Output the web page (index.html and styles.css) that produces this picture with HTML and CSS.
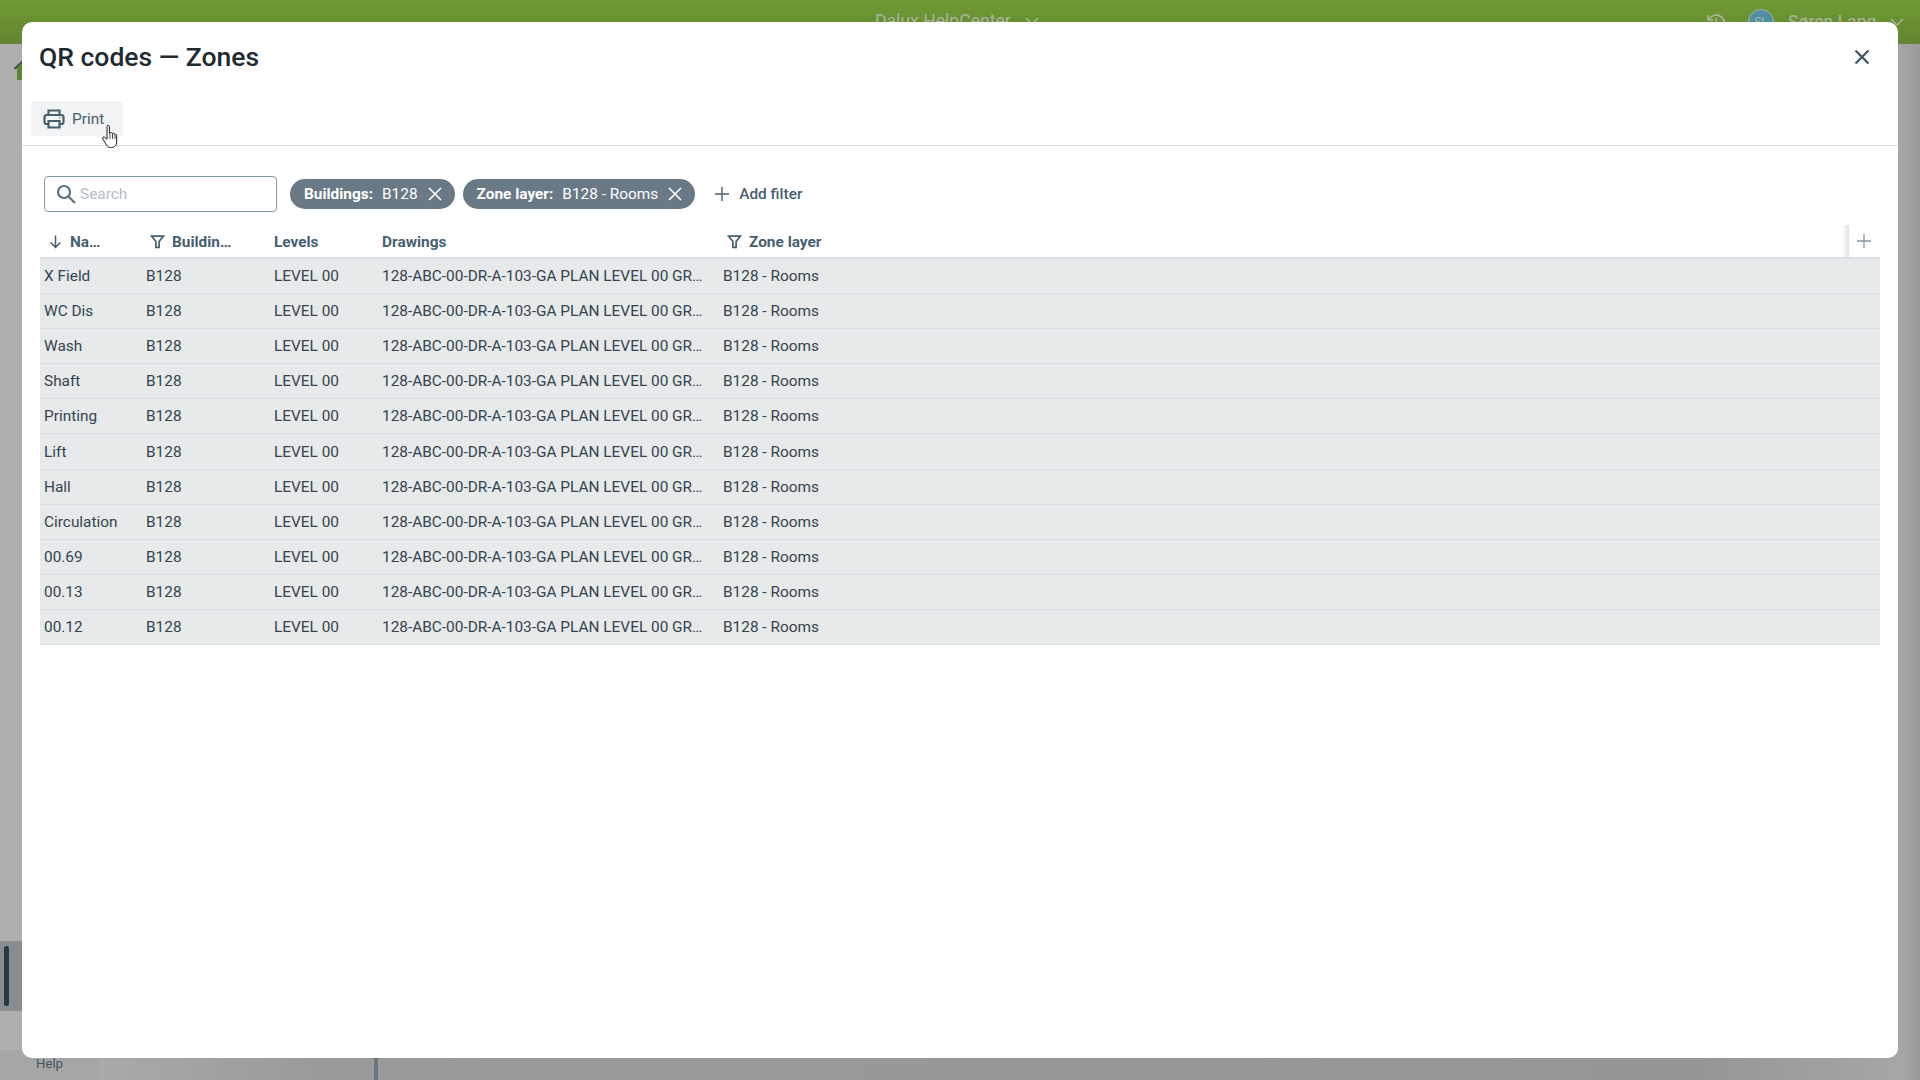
FILE: index.html
```html
<!DOCTYPE html>
<html lang="en">
<head>
    <meta charset="UTF-8">
    <title>QR codes — Zones</title>
    <link rel="stylesheet" href="styles.css">
</head>
<body>
    <!-- app behind the dialog -->
    <div class="app">
        <header class="topbar">
            <div class="project">Dalux HelpCenter
                <svg class="chev" width="14" height="14" viewBox="0 0 14 14"><path d="M1 4l6 6 6-6" fill="none" stroke="currentColor" stroke-width="1.5"/></svg>
            </div>
            <div class="user">
                <svg class="history" width="22" height="22" viewBox="0 0 22 22"><path d="M3 4v5h5M4 9a8 8 0 1 1-.6 4M11 7v5l3 2" fill="none" stroke="currentColor" stroke-width="1.6"/></svg>
                <span class="avatar">SL</span>
                <span class="username">Søren Lang</span>
                <svg class="chev" width="14" height="14" viewBox="0 0 14 14"><path d="M1 4l6 6 6-6" fill="none" stroke="currentColor" stroke-width="1.5"/></svg>
            </div>
        </header>
        <svg class="home" width="18" height="20" viewBox="0 0 18 20"><path d="M0 9L9 0l9 9h-2v11H3V9z" fill="#5f8530"/><path d="M0 9L9 1" stroke="#3f5563" stroke-width="2"/></svg>
        <div class="nav-active"><span class="nav-mark"></span></div>
        <div class="help-panel"><span class="help">Help</span></div>
        <div class="divider-v"></div>
    </div>

    <div class="modal">
        <div class="modal-head">
            <h1>QR codes — Zones</h1>
            <svg class="close" width="24" height="24" viewBox="0 0 24 24"><path d="M5.500 5.500l13 13M18.500 5.500l-13 13" fill="none" stroke="#3f5563" stroke-width="2.2"/></svg>
        </div>
        <div class="toolbar">
            <button class="print-btn">
                <svg width="24" height="24" viewBox="0 0 24 24" fill="none" stroke="#47606f" stroke-width="2.2"><path d="M6.500 8V3.500h11V8"/><path d="M6.500 17H4.500a2 2 0 0 1-2-2v-5a2 2 0 0 1 2-2h15a2 2 0 0 1 2 2v5a2 2 0 0 1-2 2h-2"/><path d="M6.500 14h11v6.500h-11z"/><path d="M17.500 10.800h1" stroke-width="1.6"/></svg>
                Print
            </button>
        </div>

        <div class="filters">
            <div class="search">
                <svg width="22" height="22" viewBox="0 0 22 22" fill="none" stroke="#5b7180" stroke-width="2.2"><circle cx="9" cy="9" r="6"/><path d="M13.500 13.500l6.500 6.500"/></svg>
                <span>Search</span>
            </div>
            <div class="chip"><b>Buildings:</b><span>B128</span>
                <svg width="16" height="16" viewBox="0 0 16 16"><path d="M2 2l12 12M14 2L2 14" stroke="#fff" stroke-width="1.6"/></svg>
            </div>
            <div class="chip"><b>Zone layer:</b><span>B128 - Rooms</span>
                <svg width="16" height="16" viewBox="0 0 16 16"><path d="M2 2l12 12M14 2L2 14" stroke="#fff" stroke-width="1.6"/></svg>
            </div>
            <div class="add-filter">
                <svg width="16" height="16" viewBox="0 0 16 16"><path d="M8 1v14M1 8h14" stroke="#47606f" stroke-width="1.4"/></svg>
                Add filter
            </div>
        </div>

        <div class="table">
            <div class="row head">
                <div class="has-icon"><svg width="15" height="15" viewBox="0 0 14 14" fill="none" stroke="#47606f" stroke-width="1.4"><path d="M7 1.500v11M2.500 8L7 12.500 11.500 8"/></svg>Na…</div>
                <div class="has-icon"><svg width="15" height="15" viewBox="0 0 14 14" fill="none" stroke="#47606f" stroke-width="1.6"><path d="M1.500 2h11L8.500 7v5.500h-3V7z"/></svg>Buildin…</div>
                <div>Levels</div>
                <div>Drawings</div>
                <div class="has-icon"><svg width="15" height="15" viewBox="0 0 14 14" fill="none" stroke="#47606f" stroke-width="1.6"><path d="M1.500 2h11L8.500 7v5.500h-3V7z"/></svg>Zone layer</div>
                <div class="add-col"><svg width="16" height="16" viewBox="0 0 16 16"><path d="M8 1v14M1 8h14" stroke="#8496a2" stroke-width="1.300"/></svg></div>
            </div>
            <div class="row"><div>X Field</div><div>B128</div><div>LEVEL 00</div><div>128-ABC-00-DR-A-103-GA PLAN LEVEL 00 GR…</div><div>B128 - Rooms</div></div>
            <div class="row"><div>WC Dis</div><div>B128</div><div>LEVEL 00</div><div>128-ABC-00-DR-A-103-GA PLAN LEVEL 00 GR…</div><div>B128 - Rooms</div></div>
            <div class="row"><div>Wash</div><div>B128</div><div>LEVEL 00</div><div>128-ABC-00-DR-A-103-GA PLAN LEVEL 00 GR…</div><div>B128 - Rooms</div></div>
            <div class="row"><div>Shaft</div><div>B128</div><div>LEVEL 00</div><div>128-ABC-00-DR-A-103-GA PLAN LEVEL 00 GR…</div><div>B128 - Rooms</div></div>
            <div class="row"><div>Printing</div><div>B128</div><div>LEVEL 00</div><div>128-ABC-00-DR-A-103-GA PLAN LEVEL 00 GR…</div><div>B128 - Rooms</div></div>
            <div class="row"><div>Lift</div><div>B128</div><div>LEVEL 00</div><div>128-ABC-00-DR-A-103-GA PLAN LEVEL 00 GR…</div><div>B128 - Rooms</div></div>
            <div class="row"><div>Hall</div><div>B128</div><div>LEVEL 00</div><div>128-ABC-00-DR-A-103-GA PLAN LEVEL 00 GR…</div><div>B128 - Rooms</div></div>
            <div class="row"><div>Circulation</div><div>B128</div><div>LEVEL 00</div><div>128-ABC-00-DR-A-103-GA PLAN LEVEL 00 GR…</div><div>B128 - Rooms</div></div>
            <div class="row"><div>00.69</div><div>B128</div><div>LEVEL 00</div><div>128-ABC-00-DR-A-103-GA PLAN LEVEL 00 GR…</div><div>B128 - Rooms</div></div>
            <div class="row"><div>00.13</div><div>B128</div><div>LEVEL 00</div><div>128-ABC-00-DR-A-103-GA PLAN LEVEL 00 GR…</div><div>B128 - Rooms</div></div>
            <div class="row"><div>00.12</div><div>B128</div><div>LEVEL 00</div><div>128-ABC-00-DR-A-103-GA PLAN LEVEL 00 GR…</div><div>B128 - Rooms</div></div>
        </div>
    </div>

    <!-- mouse pointer -->
    <svg class="cursor" width="20" height="26" viewBox="0 0 20 26"><path d="M6 2.500c0-1.600 2.400-1.600 2.400 0v7l.6-.3c.5-.9 2-.8 2.300.2l.1.4c.6-.8 2-.6 2.200.4l.1.4c.7-.6 2-.2 2 .9v6.500c0 3-1.800 5.500-5 5.500H9.500c-2 0-3-1-4-2.500L1.800 15c-.9-1.300.8-2.800 2-1.700L6 15.300z" fill="#fff" stroke="#1c1c1c" stroke-width="1"/><path d="M9 10v5M11.500 10v5M14 11v4" stroke="#1c1c1c" stroke-width=".8"/></svg>
</body>
</html>
```

FILE: styles.css
```css
* {
    box-sizing: border-box;
}

body {
    margin: 0;
    height: 1080px;
    overflow: hidden;
    font-family: Roboto, "Liberation Sans", sans-serif;
    font-size: 15.4px;
    color: #36444d;
    background: #fff;
}

/* App behind the dialog, dimmed */
.app {
    position: absolute;
    inset: 0;
    background: linear-gradient(90deg, #b0b0b0 0, #9a9a9a 320px, #969696 1700px, #a6a6a6 1900px, #9a9a9a 1920px);
}

.topbar {
    height: 44px;
    background: linear-gradient(180deg, #6f9a34, #61862f);
    color: #a9b5a0;
    position: relative;
    font-size: 17.6px;
}

.project {
    position: absolute;
    left: 875px;
    top: 11px;
    display: flex;
    align-items: center;
    gap: 14px;
}

.user {
    position: absolute;
    left: 1705px;
    top: 9px;
    display: flex;
    align-items: center;
}

.username {
    margin-left: 14px;
    margin-right: 14px;
}

.avatar {
    width: 26px;
    height: 26px;
    margin-left: 21px;
    border-radius: 50%;
    background: #4f8fa5;
    border: 1px solid #a9b5a0;
    font-size: 12px;
    text-align: center;
    line-height: 24px;
}

.home {
    position: absolute;
    left: 14px;
    top: 60px;
}

.nav-active {
    position: absolute;
    left: 0;
    top: 941px;
    width: 22px;
    height: 70px;
    background: #8a8d8f;
}

.nav-mark {
    position: absolute;
    left: 4px;
    top: 5px;
    width: 5px;
    height: 60px;
    border-radius: 3px;
    background: #263a46;
}

.help-panel {
    position: absolute;
    left: 0;
    top: 1050px;
    width: 100px;
    height: 30px;
    background: #a6a6a6;
}

.help {
    position: absolute;
    left: 36px;
    top: 6px;
    font-size: 13.200px;
    color: #3f5563;
}

.divider-v {
    position: absolute;
    left: 374px;
    top: 1040px;
    width: 4px;
    height: 40px;
    background: #6b757c;
}

/* Dialog */
.modal {
    position: absolute;
    left: 22px;
    top: 22px;
    width: 1876px;
    height: 1036px;
    background: #fff;
    border-radius: 10px;
}

.modal-head {
    display: flex;
    align-items: center;
    justify-content: space-between;
    height: 59px;
    padding: 10px 24px 0 17px;
}

h1 {
    margin: 0;
    font-size: 26.500px;
    font-weight: 500;
    color: #1f2a31;
}

.close {
    display: block;
    margin-top: 1px;
}

.toolbar {
    height: 65px;
    padding: 20px 9px 0;
    border-bottom: 1px solid #dcdfe1;
}

.print-btn {
    display: flex;
    align-items: center;
    gap: 6px;
    width: 92px;
    height: 35px;
    padding: 0 11px;
    border: none;
    border-radius: 4px;
    background: #f1f3f4;
    font-family: inherit;
    font-size: 15.400px;
    color: #47606f;
}

.filters {
    display: flex;
    align-items: center;
    height: 36px;
    margin: 30px 0 0 22px;
}

.search {
    display: flex;
    align-items: center;
    gap: 3px;
    width: 233px;
    height: 36px;
    padding-left: 10px;
    border: 1px solid #8496a2;
    border-radius: 4px;
    color: #b4bec5;
    margin-right: 13px;
}

.chip {
    display: flex;
    align-items: center;
    height: 30px;
    padding: 0 12px 0 14px;
    margin-right: 8px;
    border-radius: 15px;
    background: #697986;
    color: #fff;
}

.chip b {
    font-weight: 700;
    margin-right: 9px;
}

.chip span {
    margin-right: 9px;
}

.add-filter {
    display: flex;
    align-items: center;
    gap: 9px;
    margin-left: 11px;
    font-weight: 500;
    color: #47606f;
}

/* Table */
.table {
    margin: 13px 18px 0;
}

.row {
    display: grid;
    grid-template-columns: 102px 128px 108px 341px 1fr;
    align-items: center;
    height: 35.100px;
    background: #e6eaeb;
    border-bottom: 1px solid #dcdfe1;
    color: #36444d;
}

.row > div {
    padding-left: 4px;
    white-space: nowrap;
}

.row.head {
    height: 34px;
    padding-top: 1px;
    background: #fff;
    border-bottom: 2px solid #dcdfe1;
    font-weight: 700;
    color: #47606f;
    position: relative;
}

.row.head > div {
    display: flex;
    align-items: center;
    gap: 7px;
}

.row.head > .has-icon {
    padding-left: 8px;
}

.row.head .add-col {
    position: absolute;
    right: 0;
    top: 0;
    width: 31px;
    height: 32px;
    padding-left: 7px;
    background: #fff;
}

.row.head .add-col::before {
    content: "";
    position: absolute;
    left: -7px;
    top: 0;
    width: 7px;
    height: 32px;
    background: linear-gradient(90deg, #fff, #e0e2e4);
}

.cursor {
    position: absolute;
    left: 101px;
    top: 124px;
}
```
